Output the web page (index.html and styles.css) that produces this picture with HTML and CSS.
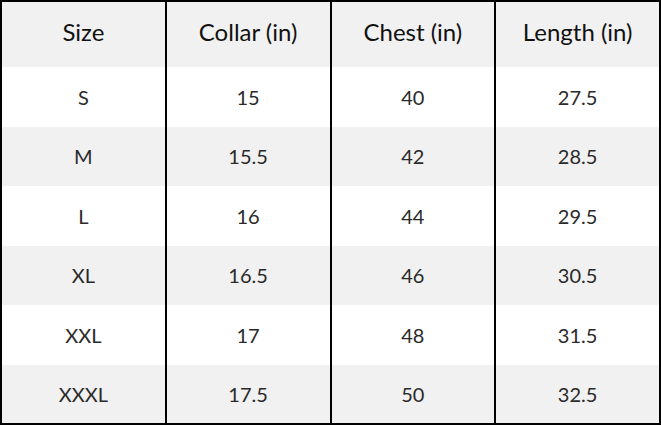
FILE: index.html
```html
<!DOCTYPE html>
<html>
<head>
<meta charset="utf-8">
<link rel="stylesheet" href="styles.css">
</head>
<body>
<table class="size-table">
  <thead>
    <tr class="row-head"><th>Size</th><th>Collar (in)</th><th>Chest (in)</th><th>Length (in)</th></tr>
  </thead>
  <tbody>
    <tr class="row-light"><td>S</td><td>15</td><td>40</td><td>27.5</td></tr>
    <tr class="row-gray"><td>M</td><td>15.5</td><td>42</td><td>28.5</td></tr>
    <tr class="row-light"><td>L</td><td>16</td><td>44</td><td>29.5</td></tr>
    <tr class="row-gray"><td>XL</td><td>16.5</td><td>46</td><td>30.5</td></tr>
    <tr class="row-light"><td>XXL</td><td>17</td><td>48</td><td>31.5</td></tr>
    <tr class="row-gray"><td>XXXL</td><td>17.5</td><td>50</td><td>32.5</td></tr>
  </tbody>
</table>
</body>
</html>
```
FILE: styles.css
```css
html, body {
  margin: 0;
  padding: 0;
  background: #ffffff;
}
.size-table {
  width: 661px;
  height: 425px;
  border-collapse: collapse;
  table-layout: fixed;
  font-family: Lato, "Open Sans", sans-serif;
  color: #151515;
  border: 2px solid #000;
}
.size-table th,
.size-table td {
  text-align: center;
  vertical-align: middle;
  border-left: 2px solid #000;
  padding: 0;
}
.size-table th {
  height: 66px;
  padding-bottom: 6px;
  box-sizing: border-box;
  font-size: 24px;
  font-weight: 400;
  color: #111;
}
.size-table td {
  height: 59px;
  box-sizing: border-box;
  font-size: 20px;
  font-weight: 400;
  color: #2a2a2a;
}
.row-head,
.row-gray {
  background: #f1f1f1;
}
.row-light {
  background: #ffffff;
}
```
